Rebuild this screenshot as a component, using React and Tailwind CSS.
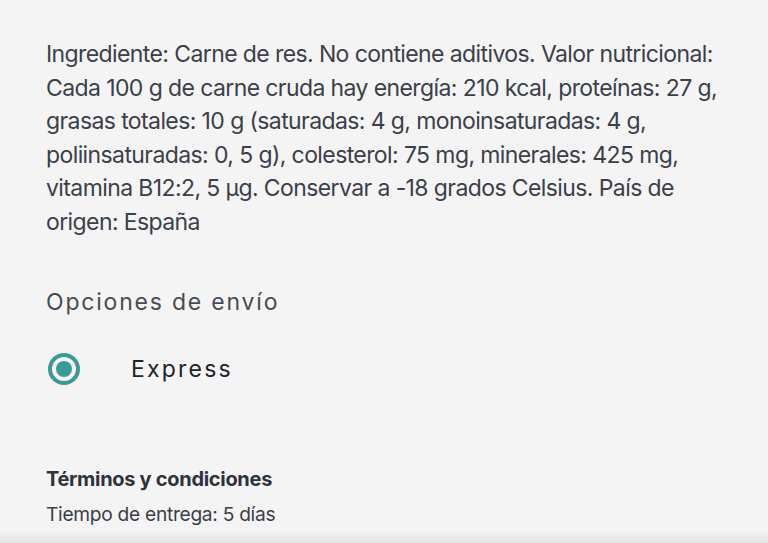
export default function App() {
  return (
    <div
      className="h-[543px] w-full overflow-hidden bg-[#f4f4f4] flex flex-col text-[#3b3f4a]"
      style={{ fontFamily: 'Inter, "Noto Sans", sans-serif' }}
    >
      <div className="flex-1 pl-[46px] pr-[30px] pt-[38px]">
        <p className="text-[23px] leading-[33.5px] tracking-[-0.6px]">
          Ingrediente: Carne de res. No contiene aditivos. Valor nutricional: Cada 100 g de carne cruda hay energía: 210 kcal, proteínas: 27 g, grasas totales: 10 g (saturadas: 4 g, monoinsaturadas: 4 g, poliinsaturadas: 0, 5 g), colesterol: 75 mg, minerales: 425 mg, vitamina B12:2, 5 µg. Conservar a -18 grados Celsius. País de origen: España
        </p>

        <h3 className="mt-[46px] text-[23px] tracking-[1.8px] text-[#474b55]">Opciones de envío</h3>

        <label className="mt-[32px] ml-[2px] flex items-center gap-[51px]">
          <span className="w-[32px] h-[32px] rounded-full border-[4px] border-[#3a9a95] flex items-center justify-center">
            <span className="w-[16px] h-[16px] rounded-full bg-[#3a9a95]" />
          </span>
          <span className="text-[23px] tracking-[2.2px] text-[#1f232b]">Express</span>
        </label>

        <h4 className="mt-[78px] text-[20px] font-bold tracking-[-0.3px] text-[#2e323b]">Términos y condiciones</h4>
        <p className="mt-[6px] text-[19.2px] tracking-[-0.3px]">Tiempo de entrega: 5 días</p>
      </div>
      <div className="h-[13px] bg-gradient-to-b from-[#f4f4f4] to-[#e2e2e2]" />
    </div>
  );
}
